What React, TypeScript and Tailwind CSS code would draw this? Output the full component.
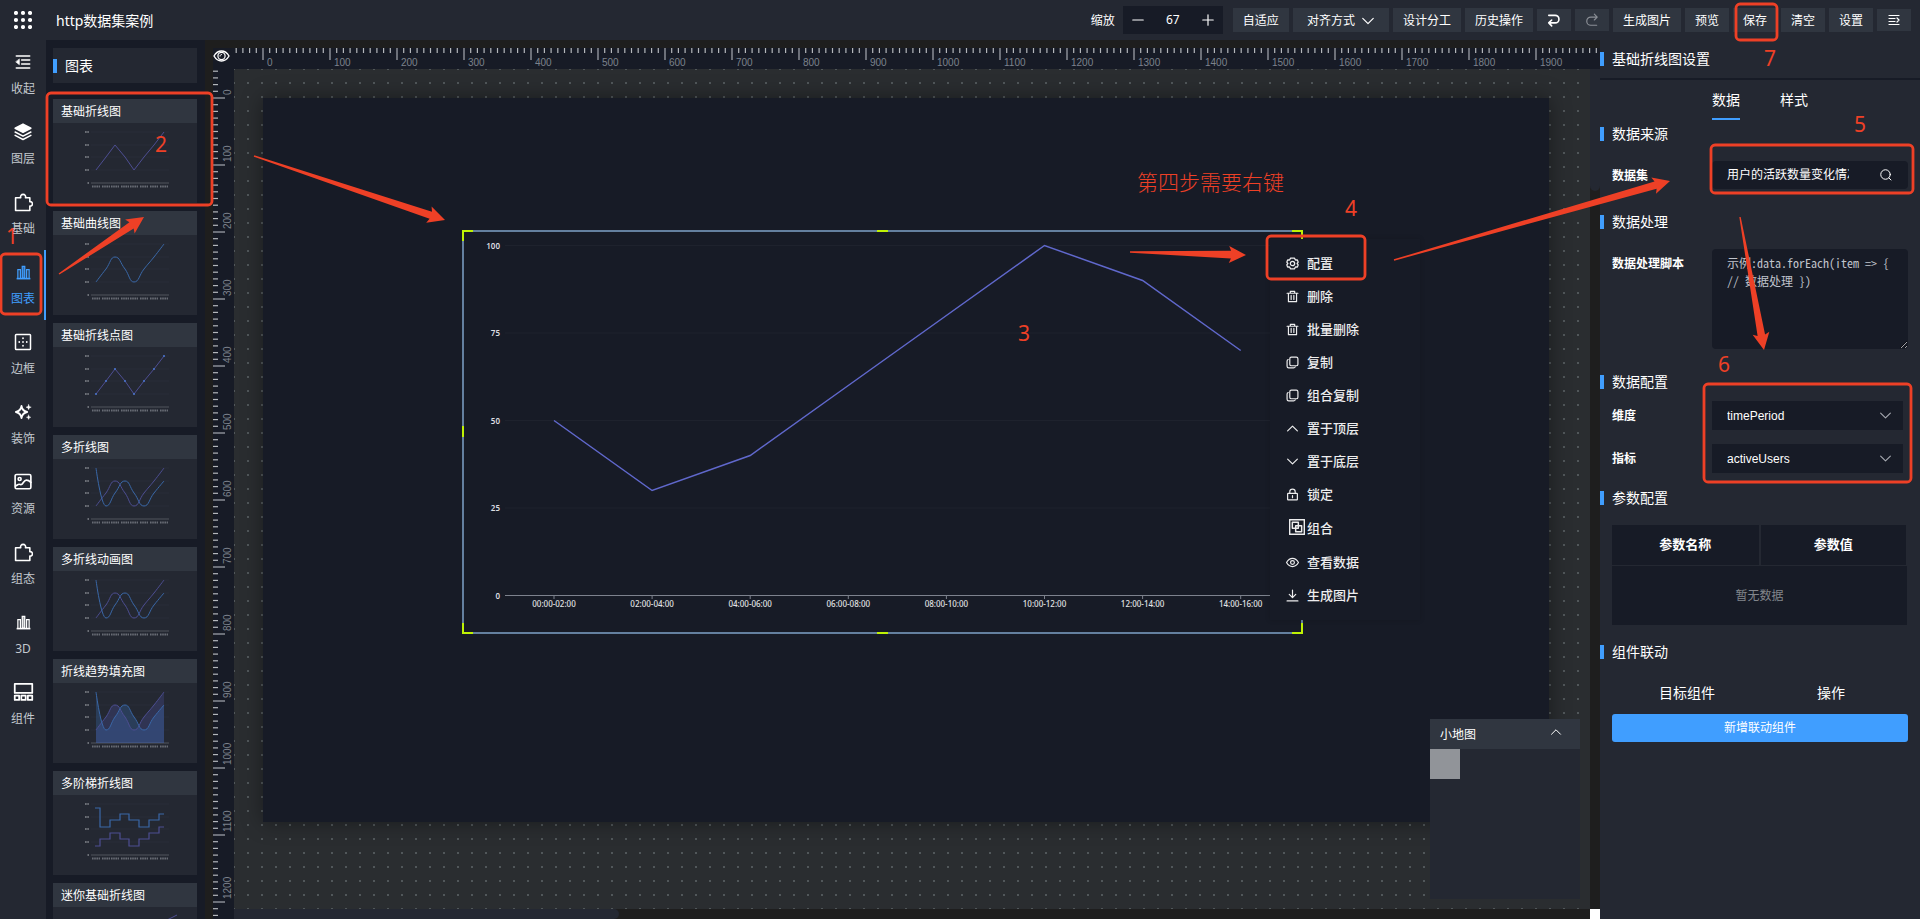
import React from "react";

type Pt = [number, number];

const RED = "#ee4026";

/* ---------- icons ---------- */

function Icon({ size = 14, sw = 2, children, box = 24 }: { size?: number; sw?: number; box?: number; children: React.ReactNode }) {
  return (
    <svg
      width={size}
      height={size}
      viewBox={`0 0 ${box} ${box}`}
      fill="none"
      stroke="currentColor"
      strokeWidth={sw}
      strokeLinecap="round"
      strokeLinejoin="round"
      className="shrink-0"
      aria-hidden="true"
    >
      {children}
    </svg>
  );
}

const chevronDown = <path d="M3 7.500l9 9 9-9" />;
const chevronUp = <path d="M3 16.500l9-9 9 9" />;
const trash = <path d="M2 6h20M8 6V2.500h8V6M4.500 6v15.500h15V6M9.500 10v7.500M14.500 10v7.500" />;
const copy = (
  <>
    <rect x="7" y="2" width="15" height="16" rx="3" />
    <path d="M4 6.500c-1.500.5-2 1.500-2 3V19c0 2 1 3 3 3h9c1.500 0 2.500-.5 3-2" />
  </>
);
const puzzle = <path d="M2 6h6.500a3.200 3.200 0 1 1 6 0H20v5a2.800 2.800 0 1 1 0 5.500V22H2z" />;
const bars = (
  <g strokeLinecap="butt" strokeLinejoin="miter">
    <path d="M1 21.800h22" strokeWidth="2.600" />
    <path d="M3 21V7.500h4V21M21 21V7.500h-4V21" strokeWidth="2" />
    <path d="M10 21V2h4v19z" fill="currentColor" fillOpacity=".6" strokeWidth="2" />
  </g>
);

/* ---------- top bar ---------- */

function BarButton({ children, wide }: { children: React.ReactNode; wide?: boolean }) {
  return (
    <button className={`flex h-6 items-center justify-center gap-1.5 bg-[#303640] pt-px text-xs text-white ${wide ? "px-3.5" : "px-2.5"}`}>
      {children}
    </button>
  );
}

function IconButton({ label, dim, children }: { label: string; dim?: boolean; children: React.ReactNode }) {
  return (
    <button aria-label={label} className={`flex h-[22px] w-[34px] items-center justify-center bg-[#303640] ${dim ? "text-[#8b8f96]" : "text-white"}`}>
      {children}
    </button>
  );
}

function Header() {
  return (
    <header className="flex h-10 shrink-0 items-center bg-[#242832] pr-[9px] pl-3.5">
      <svg width="18" height="18" viewBox="0 0 18 18" fill="#fff" aria-hidden="true">
        {[2, 9, 16].map((y) => [2, 9, 16].map((x) => <circle key={`${x}-${y}`} cx={x} cy={y} r="2.100" />))}
      </svg>
      <h1 className="ml-6 pt-0.5 text-sm text-white">http数据集案例</h1>
      <div className="ml-auto flex items-center gap-1">
        <label htmlFor="zoom" className="mr-1 pt-px text-xs text-white">缩放</label>
        <div className="mr-1.5 flex h-7 w-[100px] items-center bg-[#171b26] text-white">
          <button aria-label="缩小" className="flex w-[30px] justify-center">
            <Icon size={14} sw={2}><path d="M3 12h18" /></Icon>
          </button>
          <input id="zoom" defaultValue="67" className="w-10 bg-transparent text-center text-xs outline-none" />
          <button aria-label="放大" className="flex w-[30px] justify-center">
            <Icon size={14} sw={2}><path d="M3 12h18M12 3v18" /></Icon>
          </button>
        </div>
        <BarButton>自适应</BarButton>
        <BarButton wide>
          对齐方式
          <Icon size={14} sw={2}>{chevronDown}</Icon>
        </BarButton>
        <BarButton>设计分工</BarButton>
        <BarButton>历史操作</BarButton>
        <IconButton label="撤销">
          <Icon size={14} sw={2.8}><path d="M3 4h11a6.500 6.500 0 0 1 0 13H3M8 12l-5 5 5 5" /></Icon>
        </IconButton>
        <IconButton label="重做" dim>
          <Icon size={14} sw={2}><path d="M21 7H10a7 7 0 0 0 0 14h10M16 2l5 5-5 5" /></Icon>
        </IconButton>
        <BarButton>生成图片</BarButton>
        <BarButton>预览</BarButton>
        <BarButton>保存</BarButton>
        <BarButton>清空</BarButton>
        <BarButton>设置</BarButton>
        <IconButton label="展开">
          <Icon size={12} sw={2.4}><path d="M2 3h20M2 9h12M2 15h12M2 21h20M18 8l4 4-4 4" /></Icon>
        </IconButton>
      </div>
    </header>
  );
}

/* ---------- left navigation ---------- */

const navItems: { label: string; icon: React.ReactNode; active?: boolean }[] = [
  {
    label: "收起",
    icon: <Icon size={16} sw={2.4}><path d="M2 3h20M10 9h12M10 15h12M2 21h20" /><path d="M6.500 8v8L1.500 12z" fill="currentColor" strokeWidth="1" /></Icon>,
  },
  {
    label: "图层",
    icon: (
      <Icon size={18} sw={2}>
        <path d="M12 1.500L22.500 7 12 12.500 1.500 7z" fill="currentColor" />
        <path d="M1.500 12L12 17.500 22.500 12M1.500 16.500L12 22l10.500-5.500" />
      </Icon>
    ),
  },
  { label: "基础", icon: <Icon size={19}>{puzzle}</Icon> },
  { label: "图表", icon: <Icon size={15}>{bars}</Icon>, active: true },
  {
    label: "边框",
    icon: <Icon size={18}><rect x="2" y="2" width="20" height="20" rx="1" /><path d="M12 7v.1M12 12v.1M12 17v.1M7 12v.1M17 12v.1" strokeWidth="2.400" /></Icon>,
  },
  {
    label: "装饰",
    icon: (
      <Icon size={18} sw={2.4}>
        <path d="M10 4c.8 5 2.500 7 7.500 8-5 1-6.700 3-7.500 8-.8-5-2.500-7-7.500-8 5-1 6.700-3 7.500-8z" />
        <path d="M19.500 2l1 2.500 2.500 1-2.500 1-1 2.500-1-2.500-2.500-1 2.500-1zM19.500 16l1 2.200 2 .8-2 .8-1 2.200-1-2.200-2-.8 2-.8z" fill="currentColor" strokeWidth=".5" />
      </Icon>
    ),
  },
  {
    label: "资源",
    icon: (
      <Icon size={18} sw={2.2}>
        <rect x="1.500" y="2" width="21" height="19" rx="2" />
        <circle cx="7.500" cy="8" r="2" />
        <path d="M2 17.500c2-1 3-2.500 5-2.500 1.500 0 2 1 3.500 0 2-1.500 3-5.500 6-5.500 2 0 4 1 6 3" />
      </Icon>
    ),
  },
  { label: "组态", icon: <Icon size={19}>{puzzle}</Icon> },
  { label: "3D", icon: <Icon size={15}>{bars}</Icon> },
  {
    label: "组件",
    icon: (
      <Icon size={21}>
        <rect x="2" y="2" width="20" height="10.500" />
        <rect x="2" y="15.500" width="5" height="5" />
        <rect x="9.500" y="15.500" width="5" height="5" />
        <rect x="17" y="15.500" width="5" height="5" />
      </Icon>
    ),
  },
];

function Nav() {
  return (
    <nav className="flex w-[46px] shrink-0 flex-col bg-[#242832]">
      {navItems.map((n) => (
        <button
          key={n.label}
          className={`flex h-[70px] shrink-0 flex-col items-center border-r-2 pt-[11px] pl-0.5 text-xs ${
            n.active ? "border-[#409eff] text-[#409eff]" : "border-transparent text-white"
          }`}
        >
          <span className="flex h-[22px] items-center">{n.icon}</span>
          <span className={`mt-[7px] leading-[18px] ${n.active ? "" : "text-[#c3c8ce]"}`}>{n.label}</span>
        </button>
      ))}
    </nav>
  );
}

/* ---------- component list ---------- */

const BLUE = "#3a68a8";
const PURPLE = "#4d4e92";
const xs = [43, 53, 62, 72, 81, 91, 101, 111];
const zip = (ys: number[]): Pt[] => ys.map((y, i) => [xs[i], y]);
const up = zip([47, 34, 22, 34, 47, 34, 22, 9]);
const down = zip([9, 47, 34, 22, 34, 47, 34, 22]);

const straight = (p: Pt[]) => "M" + p.map((q) => q.join(" ")).join("L");

function smooth(p: Pt[]) {
  const last = p.length - 1;
  const slope = (k: number) => {
    const a = p[k][1] - p[k - 1][1];
    const b = p[k + 1][1] - p[k][1];
    return a * b <= 0 ? 0 : (a + b) / 2;
  };
  let d = `M${p[0][0]} ${p[0][1]}`;
  for (let i = 1; i <= last; i++) {
    const [x0, y0] = p[i - 1];
    const [x1, y1] = p[i];
    const dx = (x1 - x0) * 0.5;
    const c1 = i === 1 ? `${x0} ${y0}` : `${x0 + dx} ${y0 + slope(i - 1) * 0.5}`;
    const c2 = i === last ? `${x1} ${y1}` : `${x1 - dx} ${y1 - slope(i) * 0.5}`;
    d += `C${c1} ${c2} ${x1} ${y1}`;
  }
  return d;
}

function steps(ys: number[]) {
  let d = `M42 ${ys[0]}`;
  const edges = [47, 57, 67, 76, 86, 96, 106];
  ys.forEach((y, i) => {
    if (i > 0) d += `V${y}`;
    d += `H${i < 7 ? edges[i] : 111}`;
  });
  return d;
}

type Kind = "line" | "curve" | "dots" | "multi" | "area" | "step" | "mini";

function Thumb({ kind }: { kind: Kind }) {
  return (
    <svg width="144" height="80" viewBox="0 0 144 80" fill="none" className="block" aria-hidden="true">
      {kind !== "mini" && (
        <>
          {[9, 22, 34, 47].map((y) => (
            <g key={y}>
              <path d={`M38 ${y}H116`} stroke="#292d38" />
              <path d={`M32 ${y}h4`} stroke="#84888f" strokeWidth="1.500" strokeDasharray="1.100 .3" />
            </g>
          ))}
          <path d="M38 60H116" stroke="#50545d" />
          <path d="M34.500 60h1.500" stroke="#84888f" strokeWidth="1.500" />
          {xs.map((x) => (
            <path key={x} d={`M${x - 4} 63.500h8`} stroke="#787c84" strokeWidth="2" strokeDasharray="1.600 .6" opacity=".8" />
          ))}
        </>
      )}
      {kind === "line" && <path d={straight(up)} stroke={PURPLE} />}
      {kind === "curve" && <path d={smooth(up)} stroke={BLUE} />}
      {kind === "dots" && (
        <>
          <path d={straight(up)} stroke={PURPLE} />
          {up.map(([x, y]) => <circle key={x} cx={x} cy={y} r="1.100" fill="#4a72c8" />)}
        </>
      )}
      {kind === "area" && (
        <>
          <path d={`${smooth(up)}V60H43Z`} fill="#5b5fc7" opacity=".22" />
          <path d={`${smooth(down)}V60H43Z`} fill="#3a7bd0" opacity=".25" />
        </>
      )}
      {(kind === "multi" || kind === "area") && (
        <>
          <path d={smooth(up)} stroke={PURPLE} />
          <path d={smooth(down)} stroke={BLUE} />
        </>
      )}
      {kind === "step" && (
        <>
          <path d={steps([13, 32, 25, 19, 25, 32, 25, 19])} stroke={BLUE} strokeWidth="1.200" />
          <path d={steps([51, 44, 38, 44, 51, 44, 38, 32])} stroke={PURPLE} strokeWidth="1.200" />
        </>
      )}
      {kind === "mini" && <path d="M20 60L124 8" stroke={PURPLE} />}
    </svg>
  );
}

const cards: [string, Kind][] = [
  ["基础折线图", "line"],
  ["基础曲线图", "curve"],
  ["基础折线点图", "dots"],
  ["多折线图", "multi"],
  ["多折线动画图", "multi"],
  ["折线趋势填充图", "area"],
  ["多阶梯折线图", "step"],
  ["迷你基础折线图", "mini"],
];

function ComponentList() {
  return (
    <aside className="flex w-[159px] shrink-0 flex-col overflow-hidden bg-[#171b26] pt-2 pr-2 pl-[7px]">
      <h2 className="mb-4 flex h-[35px] w-36 shrink-0 items-center bg-[#242832] text-sm text-white">
        <span className="mr-2 h-3.5 w-1 bg-[#409eff]" />
        图表
      </h2>
      <div className="flex flex-col gap-2">
        {cards.map(([title, kind]) => (
          <article key={title} className="w-36 shrink-0 bg-[#242832]">
            <h3 className="h-6 bg-[#303640] px-2 pt-px text-xs leading-6 text-white">{title}</h3>
            <Thumb kind={kind} />
          </article>
        ))}
      </div>
    </aside>
  );
}

/* ---------- rulers ---------- */

const UNIT = 6.7;

function HorizontalRuler() {
  const ticks = Array.from({ length: 204 }, (_, i) => i - 4);
  return (
    <svg width="1366" height="21" className="block shrink-0" aria-hidden="true">
      {ticks.map((t) => {
        const x = 29 + t * UNIT;
        const big = t % 10 === 0;
        return (
          <g key={t}>
            <path d={`M${x} 0V${big ? 12 : 5}`} stroke={big ? "#777b83" : "#b4b7bb"} strokeWidth={big ? 1.8 : 1.2} />
            {big && <text x={x + 4} y="18" fontSize="10" fill="#7c828c" fontFamily="Liberation Sans, sans-serif">{t * 10}</text>}
          </g>
        );
      })}
    </svg>
  );
}

function VerticalRuler() {
  const ticks = Array.from({ length: 127 }, (_, i) => i - 4);
  return (
    <svg width="21" height="850" className="block" aria-hidden="true">
      {ticks.map((t) => {
        const y = 29 + t * UNIT;
        const big = t % 10 === 0;
        return (
          <g key={t}>
            <path d={`M0 ${y}H${big ? 12 : 5}`} stroke={big ? "#777b83" : "#b4b7bb"} strokeWidth={big ? 1.8 : 1.2} />
            {big && (
              <text transform={`translate(18 ${y - 3}) rotate(-90)`} fontSize="10" fill="#7c828c" fontFamily="Liberation Sans, sans-serif">
                {t * 10}
              </text>
            )}
          </g>
        );
      })}
    </svg>
  );
}

/* ---------- chart on the canvas ---------- */

const periods = ["00:00-02:00", "02:00-04:00", "04:00-06:00", "06:00-08:00", "08:00-10:00", "10:00-12:00", "12:00-14:00", "14:00-16:00"];
const users = [50, 30, 40, 60, 80, 100, 90, 70];

function LineChart() {
  const y = (v: number) => 365.5 - v * 3.5;
  const x = (i: number) => 92 + i * 98.1;
  return (
    <svg width="841" height="404" viewBox="0 0 841 404" fill="none" className="block" role="img" aria-label="基础折线图">
      <rect x="1" y="1" width="839" height="402" stroke="#64809f" strokeWidth="2" />
      {[0, 25, 50, 75, 100].map((v) => (
        <g key={v}>
          <path d={`M43 ${y(v)}H828`} stroke={v === 0 ? "#7d828d" : "#1e222d"} />
          <text x="38" y={y(v) + 3} fontSize="8" fontWeight="600" fill="#dcdde0" textAnchor="end">{v}</text>
        </g>
      ))}
      {periods.map((p, i) => (
        <g key={p}>
          <path d={`M${x(i)} 365v4`} stroke="#7d828d" />
          <text x={x(i)} y="377" fontSize="8" fontWeight="500" fill="#e2e3e5" textAnchor="middle">{p}</text>
        </g>
      ))}
      <path d={straight(users.map((v, i) => [x(i), y(v)] as Pt))} stroke="#6068cc" strokeWidth="1.500" />
      <path d="M1 11V1h10M415 1h11M830 1h10v10M1 196v11M1 393v10h10M415 403h11M830 403h10v-10" stroke="#bff205" strokeWidth="2" />
    </svg>
  );
}

const menuItems: [string, React.ReactNode][] = [
  ["配置", <Icon size={13} sw={2.4}><path d="M8.500 2h7l2 3.500h3.500l1.500 4-2 2.500 2 2.500-1.500 4h-3.500L15.500 22h-7l-2-3.500H3l-1.500-4 2-2.500-2-2.500 1.500-4h3.500z" /><circle cx="12" cy="12" r="4" /></Icon>],
  ["删除", <Icon size={13} sw={2.2}>{trash}</Icon>],
  ["批量删除", <Icon size={13} sw={2.2}>{trash}</Icon>],
  ["复制", <Icon size={13} sw={2.2}>{copy}</Icon>],
  ["组合复制", <Icon size={13} sw={2.2}>{copy}</Icon>],
  ["置于顶层", <Icon size={13} sw={2.2}>{chevronUp}</Icon>],
  ["置于底层", <Icon size={13} sw={2.2}>{chevronDown}</Icon>],
  ["锁定", <Icon size={13} sw={2.2}><rect x="3" y="10" width="18" height="12" rx="1" /><path d="M7 10V7a5 5 0 0 1 10 0v3M12 14v4" /></Icon>],
  ["组合", <Icon size={16} sw={2.2}><rect x="1" y="1" width="22" height="22" /><rect x="5" y="5" width="9" height="9" /><rect x="10" y="10" width="9" height="9" /></Icon>],
  ["查看数据", <Icon size={13} sw={2.2}><path d="M1 12c3-5 6.500-7.500 11-7.500S20 7 23 12c-3 5-6.500 7.500-11 7.500S4 17 1 12z" /><circle cx="12" cy="12" r="3.500" /></Icon>],
  ["生成图片", <Icon size={13} sw={2.2}><path d="M12 2v13M6 10l6 6 6-6M2 22h20" /></Icon>],
];

function ContextMenu() {
  return (
    <ul className="w-[150px] bg-[#171b26] py-2 shadow-[0_0_5px_rgba(0,0,0,0.16)]">
      {menuItems.map(([label, icon]) => {
        const group = label === "组合";
        return (
          <li key={label}>
            <button className={`flex w-full items-center gap-0.5 pl-3.5 text-[13px] font-medium text-[#ededee] ${group ? "h-[35px]" : "h-[33px]"}`}>
              <span className={`flex w-[21px] ${group ? "justify-end pb-1" : "pl-0.5"}`}>{icon}</span>
              {label}
            </button>
          </li>
        );
      })}
    </ul>
  );
}

function MiniMap() {
  return (
    <section className="h-[180px] w-[150px] bg-[#242832]">
      <div className="flex h-[30px] items-center justify-between bg-[#303640] pr-[18px] pl-2.5 text-xs text-white">
        <span className="pt-px">小地图</span>
        <button aria-label="收起小地图" className="pb-1">
          <Icon size={12}>{chevronUp}</Icon>
        </button>
      </div>
      <div className="size-[30px] bg-[#919499]" />
    </section>
  );
}

function Workspace() {
  return (
    <main className="flex min-w-0 flex-1 flex-col bg-[#1e1e1e] pt-2 pl-2">
      <div className="flex h-[21px] shrink-0 overflow-hidden bg-[#171b26]">
        <button aria-label="显示参考线" className="flex w-[21px] shrink-0 items-start justify-start pt-0.5 text-white">
          <svg width="17" height="12" viewBox="0 0 17 12" fill="none" stroke="currentColor" strokeWidth="1.400">
            <path d="M1 6C3 2.500 5.500 1 8.500 1S14 2.500 16 6c-2 3.500-4.500 5-7.500 5S3 9.500 1 6z" />
            <circle cx="8.500" cy="6" r="3.600" strokeWidth="1.200" />
            <path d="M7 6.500c0-1.500.8-2 2-2" strokeWidth="1" />
          </svg>
        </button>
        <HorizontalRuler />
      </div>
      <div className="flex min-h-0 flex-1">
        <div className="w-[21px] shrink-0 overflow-hidden bg-[#171b26]">
          <VerticalRuler />
        </div>
        <div className="flex min-w-0 flex-1 flex-col">
          <div className="flex min-h-0 flex-1">
            <div className="relative min-w-0 flex-1 overflow-hidden bg-[#2a2d30] bg-[linear-gradient(#2a2d30_12px,transparent_12px),linear-gradient(90deg,#51575a_2px,#2a2d30_2px)] bg-[size:14px_14px] bg-[position:-1px_1px,-1px_-1px]">
              <div className="absolute top-[29px] left-[29px] h-[724px] w-[1286px] bg-[#171b26] shadow-[0_0_20px_rgba(0,0,0,0.4)]">
                <div className="absolute top-[132px] left-[199px]">
                  <LineChart />
                </div>
              </div>
              <div className="absolute top-[170px] left-[1036px]">
                <ContextMenu />
              </div>
              <div className="absolute right-2.5 bottom-2.5">
                <MiniMap />
              </div>
            </div>
            <div className="w-2.5 shrink-0">
              <div className="h-[122px] rounded-b-full bg-[#242832]" />
            </div>
          </div>
          <div className="flex h-2.5 shrink-0 justify-between">
            <div className="w-[385px] rounded-r-full bg-[#242832]" />
            <div className="w-2.5 bg-white" />
          </div>
        </div>
      </div>
    </main>
  );
}

/* ---------- settings ---------- */

function Section({ children }: { children: React.ReactNode }) {
  return (
    <h3 className="flex h-5 items-center text-sm text-white">
      <span className="mr-2 h-3.5 w-1 bg-[#409eff]" />
      {children}
    </h3>
  );
}

function SelectRow({ id, label, value }: { id: string; label: string; value: string }) {
  return (
    <div className="flex items-center pr-[17px] pl-3">
      <label htmlFor={id} className="w-[100px] shrink-0 text-xs font-bold text-white">{label}</label>
      <div className="relative h-[29px] flex-1">
        <select
          id={id}
          defaultValue={value}
          className="size-full appearance-none bg-[#171b26] pl-[15px] font-['Liberation_Sans','Noto_Sans_CJK_SC',sans-serif] text-xs text-white outline-none"
        >
          <option>{value}</option>
        </select>
        <span className="pointer-events-none absolute top-2 right-[11px] text-[#a8abb2]">
          <Icon size={13} sw={2}>{chevronDown}</Icon>
        </span>
      </div>
    </div>
  );
}

function Settings() {
  return (
    <aside className="flex w-80 shrink-0 flex-col overflow-hidden bg-[#242832]">
      <div className="flex h-10 shrink-0 items-center border-b-2 border-[#171b26]">
        <Section>基础折线图设置</Section>
      </div>
      <div className="flex gap-10 pt-2.5 pl-28 text-sm text-white">
        <button className="h-[30px] border-b-2 border-[#409eff] pb-2 leading-5">数据</button>
        <button className="h-[30px] border-b-2 border-transparent pb-2 leading-5">样式</button>
      </div>
      <div className="mt-1">
        <Section>数据来源</Section>
      </div>
      <div className="mt-[17px] flex items-center pr-3 pl-3">
        <label htmlFor="dataset" className="w-[100px] shrink-0 pt-px text-xs font-bold text-white">数据集</label>
        <div className="flex h-7 flex-1 items-center justify-between rounded bg-[#171b26] pr-4 pl-[15px] text-white">
          <input id="dataset" defaultValue="用户的活跃数量变化情况" className="w-[122px] bg-transparent text-xs outline-none" />
          <Icon size={12} sw={2}><circle cx="11" cy="11" r="9.500" /><path d="M18 18l4 4" /></Icon>
        </div>
      </div>
      <div className="mt-[23px]">
        <Section>数据处理</Section>
      </div>
      <div className="mt-[17px] flex items-start pr-3 pl-3">
        <label htmlFor="script" className="w-[100px] shrink-0 pt-[7px] text-xs font-bold text-white">数据处理脚本</label>
        <textarea
          id="script"
          placeholder="示例:data.forEach(item => { // 数据处理 })"
          className="h-[100px] min-w-0 flex-1 rounded bg-[#171b26] px-[15px] py-[5px] font-['Noto_Sans_Mono_CJK_SC','Noto_Sans_CJK_SC',monospace] text-xs leading-[18px] text-[#c0c4cc] outline-none placeholder:text-[#c0c4cc]"
        />
      </div>
      <div className="mt-[23px]">
        <Section>数据配置</Section>
      </div>
      <div className="mt-[9px] flex flex-col gap-3.5">
        <SelectRow id="dimension" label="维度" value="timePeriod" />
        <SelectRow id="metric" label="指标" value="activeUsers" />
      </div>
      <div className="mt-[15px]">
        <Section>参数配置</Section>
      </div>
      <table className="mx-3 mt-[17px] table-fixed border-collapse text-[13px] text-white">
        <thead>
          <tr className="h-10 border-b border-[#242832]">
            <th className="w-1/2 border-r-2 border-[#242832] bg-[#171b26] font-bold">参数名称</th>
            <th className="w-1/2 border-r-2 border-[#242832] bg-[#171b26] font-bold">参数值</th>
          </tr>
        </thead>
        <tbody>
          <tr className="h-[60px]">
            <td colSpan={2} className="bg-[#171b26] pt-0.5 text-center text-xs text-[#82868c]">暂无数据</td>
          </tr>
        </tbody>
      </table>
      <div className="mt-[17px]">
        <Section>组件联动</Section>
      </div>
      <div className="mx-3 mt-[21px] flex h-5 items-center text-center text-sm text-white">
        <span className="w-[150px]">目标组件</span>
        <span className="w-[138px]">操作</span>
      </div>
      <button className="mx-3 mt-[11px] h-7 shrink-0 rounded-[3px] bg-[#409eff] text-xs text-white">新增联动组件</button>
    </aside>
  );
}

/* ---------- annotations ---------- */

function Arrow({ from, to }: { from: Pt; to: Pt }) {
  const len = Math.hypot(to[0] - from[0], to[1] - from[1]);
  const angle = (Math.atan2(to[1] - from[1], to[0] - from[0]) * 180) / Math.PI;
  return (
    <path
      transform={`translate(${from[0]} ${from[1]}) rotate(${angle})`}
      d={`M0 -.7L${len - 15} -3.800L${len - 17} -8.500L${len} 0L${len - 17} 8.500L${len - 15} 3.800L0 .7Z`}
      fill={RED}
    />
  );
}

const boxes = [
  [1, 254, 40, 60],
  [47, 93, 165, 112],
  [1736, 4, 41, 36],
  [1711, 145, 202, 48],
  [1704, 384, 207, 98],
  [1267, 236, 98, 43],
];

const marks: [string, number, number][] = [
  ["1", 6, 244],
  ["2", 155, 152],
  ["3", 1018, 341],
  ["4", 1345, 216],
  ["5", 1854, 132],
  ["6", 1718, 372],
  ["7", 1764, 66],
];

function Annotations() {
  return (
    <svg width="1920" height="919" className="pointer-events-none absolute top-0 left-0" fill="none">
      {boxes.map(([x, y, w, h]) => (
        <rect key={`${x}-${y}`} x={x} y={y} width={w} height={h} rx="4" stroke={RED} strokeWidth="2.800" />
      ))}
      <Arrow from={[59, 274]} to={[144, 217]} />
      <Arrow from={[254, 156]} to={[445, 220]} />
      <Arrow from={[1130, 252]} to={[1246, 255]} />
      <Arrow from={[1394, 260]} to={[1670, 181]} />
      <Arrow from={[1740, 217]} to={[1764, 350]} />
      {marks.map(([t, x, y]) => (
        <text key={t} x={x} y={y} fontSize="21" fill={RED}>{t}</text>
      ))}
      <text x="1137" y="190" fontSize="21" fontWeight="300" fill={RED}>第四步需要右键</text>
    </svg>
  );
}

export default function App() {
  return (
    <div className="relative flex h-screen flex-col overflow-hidden bg-[#171b26] font-['Noto_Sans','Noto_Sans_CJK_SC',sans-serif]">
      <Header />
      <div className="flex min-h-0 flex-1">
        <Nav />
        <ComponentList />
        <Workspace />
        <Settings />
      </div>
      <Annotations />
    </div>
  );
}
